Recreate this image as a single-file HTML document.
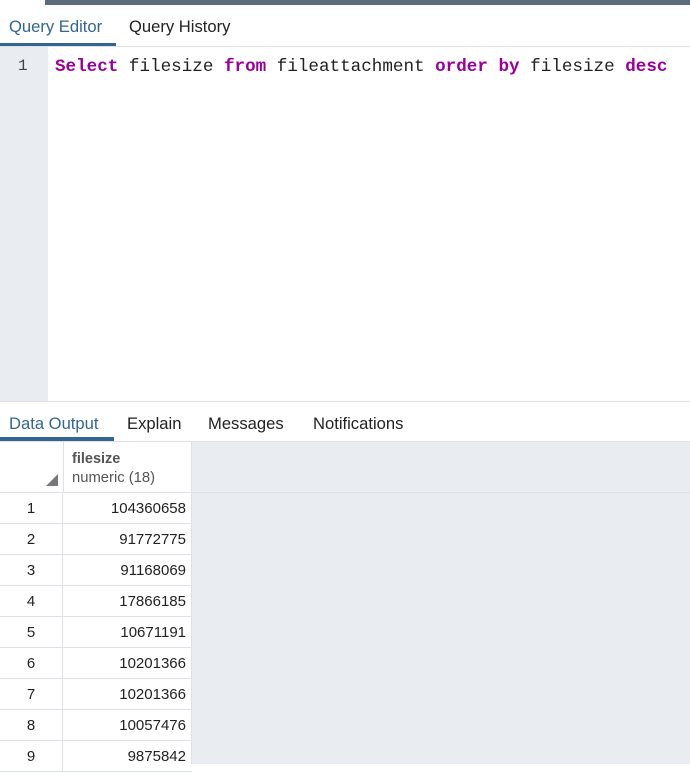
<!DOCTYPE html>
<html><head><style>
*{margin:0;padding:0;box-sizing:border-box}
body{width:690px;height:764px;overflow:hidden;background:#fff;font-family:"Liberation Sans",sans-serif;position:relative}
.abs{position:absolute}
.topbar{left:45px;top:0;width:645px;height:5px;background:#5b6b7c}
.tab{position:absolute;font-size:16.6px;color:#222}
.act{color:#326690}
.code{font-family:"Liberation Mono",monospace;font-size:17.6px;color:#222;white-space:pre}
.kw{color:#990099;font-weight:bold}
.row{position:absolute;left:0;height:31px;width:192px;border-bottom:1px solid #dde0e6}
.rn{position:absolute;left:0;width:63px;height:31px;border-right:1px solid #dde0e6;text-align:center;line-height:31px;font-size:15px;color:#222}
.rv{position:absolute;left:64px;width:122px;height:31px;text-align:right;line-height:31px;font-size:15px;color:#222}
</style></head><body>
<div class="abs topbar"></div>
<div class="tab act" style="left:9px;top:17px">Query Editor</div>
<div class="tab" style="left:129px;top:17px">Query History</div>
<div class="abs" style="left:0;top:46px;width:690px;height:1px;background:#dde0e6"></div>
<div class="abs" style="left:0;top:43px;width:116px;height:3px;background:#326690"></div>
<div class="abs" style="left:0;top:47px;width:48px;height:354px;background:#e9ecf1"></div>
<div class="abs code" style="left:18px;top:57px;color:#444;font-size:16px">1</div>
<div class="abs code" style="left:55px;top:57px"><span class="kw">Select</span> filesize <span class="kw">from</span> fileattachment <span class="kw">order</span> <span class="kw">by</span> filesize <span class="kw">desc</span></div>
<div class="abs" style="left:0;top:401px;width:690px;height:1px;background:#dde0e6"></div>
<div class="tab act" style="left:9px;top:414px">Data Output</div>
<div class="tab" style="left:127px;top:414px">Explain</div>
<div class="tab" style="left:208px;top:414px">Messages</div>
<div class="tab" style="left:313px;top:414px">Notifications</div>
<div class="abs" style="left:0;top:441px;width:690px;height:1px;background:#dde0e6"></div>
<div class="abs" style="left:0;top:437px;width:114px;height:4px;background:#326690"></div>
<div class="abs" style="left:192px;top:442px;width:498px;height:322px;background:#e9ecf1"></div>
<div class="abs" style="left:191px;top:442px;width:1px;height:50px;background:#dde0e6"></div>
<div class="abs" style="left:63px;top:442px;width:1px;height:50px;background:#dde0e6"></div>
<div class="abs" style="left:0;top:492px;width:690px;height:1px;background:#dde0e6"></div>
<svg class="abs" style="left:46px;top:474px" width="12" height="12"><polygon points="12,0 12,12 0,12" fill="#777"/></svg>
<div class="abs" style="left:72px;top:451px;font-size:14.5px;font-weight:bold;color:#555">filesize</div>
<div class="abs" style="left:72px;top:470px;font-size:14.8px;color:#555">numeric (18)</div>
<div class="row" style="top:493px"><div class="rn">1</div><div class="rv">104360658</div></div>
<div class="row" style="top:524px"><div class="rn">2</div><div class="rv">91772775</div></div>
<div class="row" style="top:555px"><div class="rn">3</div><div class="rv">91168069</div></div>
<div class="row" style="top:586px"><div class="rn">4</div><div class="rv">17866185</div></div>
<div class="row" style="top:617px"><div class="rn">5</div><div class="rv">10671191</div></div>
<div class="row" style="top:648px"><div class="rn">6</div><div class="rv">10201366</div></div>
<div class="row" style="top:679px"><div class="rn">7</div><div class="rv">10201366</div></div>
<div class="row" style="top:710px"><div class="rn">8</div><div class="rv">10057476</div></div>
<div class="row" style="top:741px"><div class="rn">9</div><div class="rv">9875842</div></div>
<div class="abs" style="left:191px;top:493px;width:1px;height:271px;background:#dde0e6"></div>
</body></html>
